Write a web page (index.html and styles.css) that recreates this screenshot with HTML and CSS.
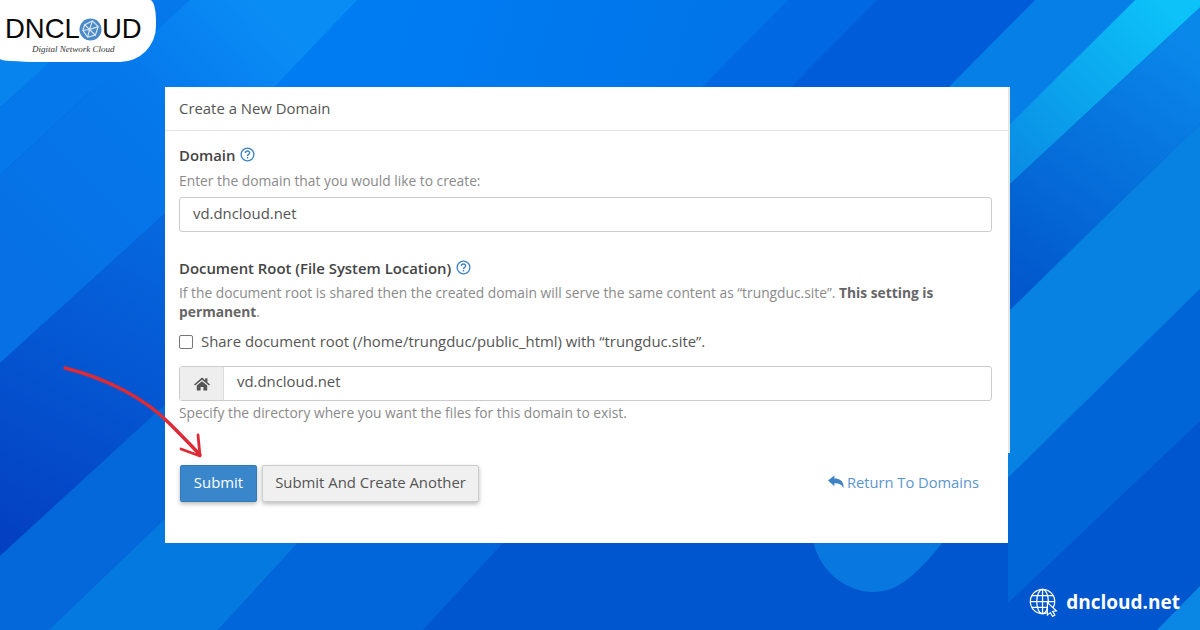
FILE: index.html
```html
<!DOCTYPE html>
<html lang="en">
<head>
  <meta charset="UTF-8">
  <title>Create a New Domain</title>
  <link rel="stylesheet" href="styles.css">
</head>
<body>
  <div class="stage">
    <!-- background stripes -->
    <svg class="bg" viewBox="0 0 1200 630">
      <defs>
        <linearGradient id="gTop" gradientUnits="userSpaceOnUse" x1="400" y1="0" x2="730" y2="90">
          <stop offset="0" stop-color="#007cf2" />
          <stop offset="1" stop-color="#0074e8" />
        </linearGradient>
        <linearGradient id="gLight" gradientUnits="userSpaceOnUse" x1="270" y1="20" x2="20" y2="270">
          <stop offset="0" stop-color="#0a8cf5" />
          <stop offset="0.4" stop-color="#0578ec" />
          <stop offset="1" stop-color="#0670e4" />
        </linearGradient>
        <linearGradient id="gDark" gradientUnits="userSpaceOnUse" x1="170" y1="230" x2="10" y2="540">
          <stop offset="0" stop-color="#0668de" />
          <stop offset="1" stop-color="#0340c2" />
        </linearGradient>
        <linearGradient id="gCyan" gradientUnits="userSpaceOnUse" x1="1170" y1="10" x2="1010" y2="170">
          <stop offset="0" stop-color="#0cc2f8" />
          <stop offset="1" stop-color="#0a8ce4" />
        </linearGradient>
        <linearGradient id="gRight" gradientUnits="userSpaceOnUse" x1="1190" y1="40" x2="1020" y2="290">
          <stop offset="0" stop-color="#0a88ea" />
          <stop offset="1" stop-color="#0258cc" />
        </linearGradient>
      </defs>
      <rect width="1200" height="630" fill="#0056ce" />
      <rect width="1010" height="90" fill="url(#gTop)" />
      <polygon points="0,0 117,0 0,108" fill="#0784ee" />
      <polygon points="117,0 190,0 0,175 0,108" fill="#0578ec" />
      <polygon points="190,0 357,0 274,87 170,209 0,363 0,175" fill="url(#gLight)" />
      <polygon points="788,0 877,0 791,87 702,87" fill="#0068e2" />
      <polygon points="877,0 1035,0 949,87 791,87" fill="#005cd8" />
      <polygon points="1035,0 1135,0 1008,126 1008,87 949,87" fill="#0680e6" />
      <polygon points="1135,0 1208,0 1008,186 1008,126" fill="url(#gCyan)" />
      <polygon points="1208,0 1200,8 1200,124 1008,312 1008,186" fill="url(#gRight)" />
      <polygon points="1200,124 1200,289 1008,478 1008,312" fill="#0882e2" />
      <polygon points="1200,289 1200,421 1008,603 1008,478" fill="#0066d8" />
      <polygon points="1200,586 1157,630 1200,630" fill="#0a86e4" />
      <polygon points="170,209 0,363 0,556 170,400" fill="url(#gDark)" />
      <polygon points="0,556 170,400 170,519 49,630 0,630" fill="#0468da" />
      <polygon points="49,630 165,519 320,519 218,630" fill="#047ae0" />
      <polygon points="218,630 320,519 525,519 423,630" fill="#0066da" />
      <path d="M813,540 C820,575 850,592 873,592 C900,592 918,572 945,540 Z" fill="#0878e0" />
    </svg>

    <!-- logo -->
    <div class="logo">
      <div class="logo-word">
        DNCL<svg class="logo-globe" viewBox="0 0 24 24">
          <circle cx="12" cy="12" r="11.5" fill="#4a8ac6" />
          <g fill="none" stroke="#dbe8f4" stroke-width="1.2">
            <path d="M6 7 L14 3 L20 9 L17 18 L9 20 L4 13 Z" />
            <path d="M6 7 L11 12 L20 9 M11 12 L17 18 M11 12 L9 20 M11 12 L4 13 M14 3 L11 12" />
          </g>
        </svg>UD
      </div>
      <div class="logo-sub">Digital Network Cloud</div>
    </div>

    <!-- white card -->
    <div class="card">
      <div class="panel">
        <div class="panel-head">Create a New Domain</div>
        <div class="panel-body">
          <div class="field-label">
            Domain
            <svg class="help" viewBox="0 0 16 16">
              <circle cx="8" cy="8" r="6.8" fill="none" stroke="#3c82c4" stroke-width="1.4" />
              <path d="M5.8 6.3 C5.8 3.6 10.3 3.6 10.3 6.2 C10.3 7.9 8 7.8 8 9.6" fill="none" stroke="#3c82c4" stroke-width="1.5" />
              <rect x="7.2" y="10.6" width="1.6" height="1.6" fill="#3c82c4" />
            </svg>
          </div>
          <div class="hint">Enter the domain that you would like to create:</div>
          <div class="input">vd.dncloud.net</div>

          <div class="field-label second">
            Document Root (File System Location)
            <svg class="help" viewBox="0 0 16 16">
              <circle cx="8" cy="8" r="6.8" fill="none" stroke="#3c82c4" stroke-width="1.4" />
              <path d="M5.8 6.3 C5.8 3.6 10.3 3.6 10.3 6.2 C10.3 7.9 8 7.8 8 9.6" fill="none" stroke="#3c82c4" stroke-width="1.5" />
              <rect x="7.2" y="10.6" width="1.6" height="1.6" fill="#3c82c4" />
            </svg>
          </div>
          <div class="hint wrap">If the document root is shared then the created domain will serve the same content as “trungduc.site”. <b>This setting is</b> <b>permanent</b>.</div>
          <label class="check">
            <span class="box"></span>
            Share document root (/home/trungduc/public_html) with “trungduc.site”.
          </label>
          <div class="input-group">
            <span class="addon">
              <svg class="home" viewBox="0 0 16 14">
                <path d="M8 0.6 L0 7.4 L1 8.6 L8 2.8 L15 8.6 L16 7.4 L13.4 5.2 V1.2 H11.2 V3.3 Z" />
                <path d="M2.8 8.4 L8 4.2 L13.2 8.4 V13.6 H9.4 V10 H6.6 V13.6 H2.8 Z" />
              </svg>
            </span>
            <span class="input-text">vd.dncloud.net</span>
          </div>
          <div class="hint small-gap">Specify the directory where you want the files for this domain to exist.</div>
        </div>
      </div>
      <div class="actions">
        <button class="btn btn-primary">Submit</button>
        <button class="btn btn-default">Submit And Create Another</button>
        <a class="return">
          <svg class="reply" viewBox="0 0 16 14">
            <path d="M0 5.6 L6.4 0.4 V3.6 C12 3.6 16 6 15.6 13.4 C14.4 9.8 11.4 8.2 6.4 8.2 V11.2 Z" />
          </svg>
          Return To Domains
        </a>
      </div>
    </div>

    <!-- red arrow drawn over the card -->
    <svg class="arrow" viewBox="0 0 1200 630">
      <g fill="none" stroke="#dc2a36" stroke-linecap="round" stroke-linejoin="round">
        <path d="M65,368 C105,378 145,398 170,424 C182,436 192,446 200,455" stroke-width="3.4" />
        <path d="M198,435 L200,456 L181,449" stroke-width="2.8" />
      </g>
    </svg>

    <!-- site badge -->
    <div class="site">
      <svg class="site-globe" viewBox="0 0 30 30">
        <g fill="none" stroke="#fff" stroke-width="1.3">
          <circle cx="14" cy="14" r="12.6" />
          <ellipse cx="14" cy="14" rx="6" ry="12.6" />
          <path d="M14 1.4 V26.6 M3 8 H25 M1.4 14 H26.6 M3 20 H25" />
        </g>
        <path d="M19 15 L19 28 L22 25.4 L24.4 29.4 L26.8 28 L24.4 24.2 L28.4 23.6 Z" fill="#0056ce" stroke="#fff" stroke-width="1.2" />
      </svg>
      <span>dncloud.net</span>
    </div>
  </div>
</body>
</html>
```

FILE: styles.css
```css
body {
  margin: 0;
  font-family: "Open Sans", sans-serif;
}
.stage {
  position: relative;
  width: 1200px;
  height: 630px;
  overflow: hidden;
  padding: 87px 0 0 165px;
  box-sizing: border-box;
}
.bg, .arrow {
  position: absolute;
  left: 0;
  top: 0;
  width: 1200px;
  height: 630px;
}
.arrow { pointer-events: none; }

/* logo */
.logo {
  position: absolute;
  left: 0;
  top: 0;
  width: 156px;
  height: 62px;
  box-sizing: border-box;
  padding: 15px 0 0 5px;
  background: #fff;
  border-radius: 0 6px 36px 40px / 0 20px 36px 3px;
  color: #0a0a0a;
}
.logo-word {
  display: flex;
  align-items: center;
  height: 28px;
  font-family: "Liberation Sans", sans-serif;
  font-size: 27.5px;
  line-height: 28px;
}
.logo-globe {
  width: 23px;
  height: 23px;
  margin: 0 0 0 -1px;
}
.logo-sub {
  margin: 0 0 0 27px;
  font-family: "Liberation Serif", serif;
  font-style: italic;
  font-size: 9px;
  line-height: 12px;
  color: #333;
}

/* card */
.card {
  position: relative;
  width: 843px;
  height: 456px;
  background: #fff;
}
.panel {
  width: 845px;
  height: 366px;
  box-sizing: border-box;
  background: #fff;
  border-right: 2px solid #e2e6ea;
}
.panel-head {
  height: 44px;
  box-sizing: border-box;
  padding: 0 14px;
  border-bottom: 1px solid #e4e4e4;
  font-size: 14.9px;
  line-height: 43px;
  color: #555;
}
.panel-body { padding: 12px 16px 0 14px; }
.field-label {
  display: flex;
  align-items: center;
  gap: 5px;
  height: 23px;
  font-size: 14.9px;
  font-weight: 600;
  color: #444;
}
.field-label.second { margin-top: 24px; }
.help { width: 15px; height: 15px; }
.hint {
  margin-top: 5px;
  font-size: 13.8px;
  line-height: 19px;
  color: #8a8a8a;
}
.hint.wrap { margin-top: 4px; }
.hint b { color: #666; }
.hint.small-gap { margin-top: 2px; }
.input {
  margin-top: 7px;
  height: 35px;
  box-sizing: border-box;
  padding: 0 13px;
  border: 1px solid #ccc;
  border-radius: 3px;
  font-size: 14.9px;
  line-height: 30px;
  color: #555;
}
.check {
  display: flex;
  align-items: center;
  gap: 8px;
  margin-top: 9px;
  height: 22px;
  font-size: 14.9px;
  color: #555;
}
.box {
  width: 12px;
  height: 12px;
  margin-top: 2px;
  border: 1px solid #777;
  border-radius: 2px;
}
.input-group {
  display: flex;
  margin-top: 14px;
  height: 35px;
  box-sizing: border-box;
  border: 1px solid #ccc;
  border-radius: 3px;
}
.addon {
  display: flex;
  align-items: center;
  justify-content: center;
  width: 43px;
  background: #eee;
  border-right: 1px solid #ddd;
}
.home { width: 16px; height: 14px; fill: #555; }
.input-text {
  padding-left: 13px;
  font-size: 14.9px;
  line-height: 29px;
  color: #555;
}

/* bottom buttons */
.actions {
  display: flex;
  align-items: center;
  gap: 5px;
  padding: 12px 29px 0 15px;
}
.btn {
  height: 37px;
  box-sizing: border-box;
  padding: 0 0 4px;
  border-radius: 2px;
  font-family: "Open Sans", sans-serif;
  font-size: 14.9px;
  box-shadow: 0 2px 4px rgba(0, 0, 0, 0.28);
}
.btn-primary {
  width: 77px;
  border: 1px solid #337ab7;
  background: #3a86ca;
  color: #fff;
}
.btn-default {
  width: 217px;
  border: 1px solid #ccc;
  background: #f0f0f0;
  color: #555;
}
.return {
  display: flex;
  align-items: center;
  gap: 3px;
  margin-left: auto;
  padding-bottom: 4px;
  font-size: 14.7px;
  color: #5c96cf;
}
.reply { width: 16px; height: 14px; fill: #3d82c4; }

/* badge bottom right */
.site {
  position: absolute;
  right: 20px;
  top: 587px;
  display: flex;
  align-items: center;
  gap: 8px;
  height: 30px;
  font-size: 19px;
  font-weight: 700;
  color: #fff;
}
.site-globe { width: 29px; height: 29px; }
```
